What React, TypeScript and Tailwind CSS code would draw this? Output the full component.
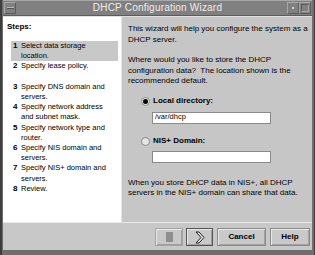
import React from 'react'

// Wizard step labels, pre-wrapped the way the panel shows them
const STEPS: Array<[string, string?]> = [
  ['Select data storage', 'location.'],
  ['Specify lease policy.'],
  ['Specify DNS domain and', 'servers.'],
  ['Specify network address', 'and subnet mask.'],
  ['Specify network type and', 'router.'],
  ['Specify NIS domain and', 'servers.'],
  ['Specify NIS+ domain and', 'servers.'],
  ['Review.'],
]

function TitleBar() {
  return (
    <div className="relative h-[16px] bg-[#808080] border-t border-t-[#a8a8a8] border-b border-b-[#5c5c5c] flex items-center justify-center">
      {/* window menu button */}
      <div className="absolute left-[1px] top-[1px] w-[12px] h-[12px] border border-t-[#a8a8a8] border-l-[#a8a8a8] border-r-[#5c5c5c] border-b-[#5c5c5c] flex items-center justify-center">
        <div className="w-[7px] h-[2px] bg-[#b8b8b8] border-b border-b-[#555]" />
      </div>
      <span className="text-[10px] leading-none text-[#eeeeee] tracking-[0.2px]">DHCP Configuration Wizard</span>
      {/* minimize / maximize */}
      <div className="absolute right-[13px] top-[1px] w-[12px] h-[12px] border border-t-[#a8a8a8] border-l-[#a8a8a8] border-r-[#5c5c5c] border-b-[#5c5c5c] flex items-center justify-center">
        <div className="w-[2px] h-[2px] bg-[#cfcfcf]" />
      </div>
      <div className="absolute right-[1px] top-[1px] w-[12px] h-[12px] border border-t-[#a8a8a8] border-l-[#a8a8a8] border-r-[#5c5c5c] border-b-[#5c5c5c] flex items-center justify-center">
        <div className="w-[8px] h-[8px] border border-t-[#5c5c5c] border-l-[#5c5c5c] border-r-[#a8a8a8] border-b-[#a8a8a8]" />
      </div>
    </div>
  )
}

function Radio({ checked }: { checked?: boolean }) {
  return (
    <span className="w-[9px] h-[9px] rounded-full border border-[#8a8a8a] bg-[#e6e6e6] flex items-center justify-center">
      {checked && <span className="w-[5px] h-[5px] rounded-full bg-black" />}
    </span>
  )
}

function Button({ children, className = '' }: { children: React.ReactNode; className?: string }) {
  return (
    <div
      className={`h-[18px] border border-[#8c8c8c] bg-[#c9c9c9] flex items-center justify-center shadow-[inset_1px_1px_0_#e8e8e8,inset_-1px_-1px_0_#a0a0a0] ${className}`}
    >
      {children}
    </div>
  )
}

export default function App() {
  return (
    <div
      className="w-[315px] h-[255px] bg-[#6e6e6e] border-l-[2px] border-l-[#3e3e3e] border-r border-r-[#3e3e3e] flex flex-col pl-[1px] pr-[2px] pb-[5px] overflow-hidden"
      style={{ fontFamily: '"Liberation Sans", Arial, sans-serif' }}
    >
      <TitleBar />

      <div className="flex-1 flex flex-col bg-[#c8c8c8] border-t border-t-[#e0e0e0]">
        <div className="h-[205px] flex">
          {/* Steps panel */}
          <div className="w-[118px] bg-white pl-[4px] pt-[5px] text-[8px] text-black">
            <div className="font-bold leading-[10px]">Steps:</div>
            <div className="mt-[9px] flex flex-col text-[7.5px]">
              {STEPS.map(([first, second], i) => (
                <div
                  key={i}
                  className={`h-[20.4px] ml-[4px] mr-[3px] pl-[2px] leading-[10.2px] flex ${i === 0 ? 'bg-[#c8c8c8]' : ''}`}
                >
                  <span className="w-[8px] font-bold text-[8px]">{i + 1}</span>
                  <span>
                    {first}
                    {second && <br />}
                    {second}
                  </span>
                </div>
              ))}
            </div>
          </div>

          {/* Content panel */}
          <div className="flex-1 bg-[#c6c6c6] border-l border-l-[#e4e4e4] pl-[6px] pt-[7px] text-[8px] leading-[10.5px] text-black">
            <p>
              This wizard will help you configure the system as a<br />
              DHCP server.
            </p>
            <p className="mt-[10px]">
              Where would you like to store the DHCP<br />
              configuration data?&nbsp; The location shown is the<br />
              recommended default.
            </p>

            <div className="mt-[10px] ml-[13px] flex items-center gap-[3px] h-[10px]">
              <Radio checked />
              <span className="font-bold">Local directory:</span>
            </div>
            <div className="mt-[5px] ml-[24px] w-[119px] h-[12px] bg-white border border-[#8a8a8a] pl-[2px] flex items-center text-[7.5px]">
              /var/dhcp
            </div>

            <div className="mt-[13px] ml-[13px] flex items-center gap-[3px] h-[10px]">
              <Radio />
              <span className="font-bold">NIS+ Domain:</span>
            </div>
            <div className="mt-[4px] ml-[24px] w-[119px] h-[12px] bg-white border border-[#8a8a8a]" />

            <p className="mt-[15px]">
              When you store DHCP data in NIS+, all DHCP<br />
              servers in the NIS+ domain can share that data.
            </p>
          </div>
        </div>

        {/* Button bar */}
        <div className="flex-1 border-t border-t-[#e8e8e8] flex items-start justify-end pt-[5px] pr-[2px] gap-[3px]">
          <Button className="w-[28px] border-[#a4a4a4]">
            <div className="w-[7px] h-[10px] bg-[#8e8e8e]" />
          </Button>
          <Button className="w-[27px] border-[#555555]">
            <svg width="10" height="13" viewBox="0 0 10 13">
              <polygon
                points="1,1 4,1 9,6.5 4,12 1,12 6,6.5"
                fill="#e6e6e6"
                stroke="#222"
                strokeWidth="1"
                strokeLinejoin="miter"
              />
            </svg>
          </Button>
          <Button className="w-[49px] ml-[1px]">
            <span className="text-[8px] font-bold text-black">Cancel</span>
          </Button>
          <Button className="w-[40px] ml-[1px]">
            <span className="text-[8px] font-bold text-black">Help</span>
          </Button>
        </div>
      </div>
    </div>
  )
}
